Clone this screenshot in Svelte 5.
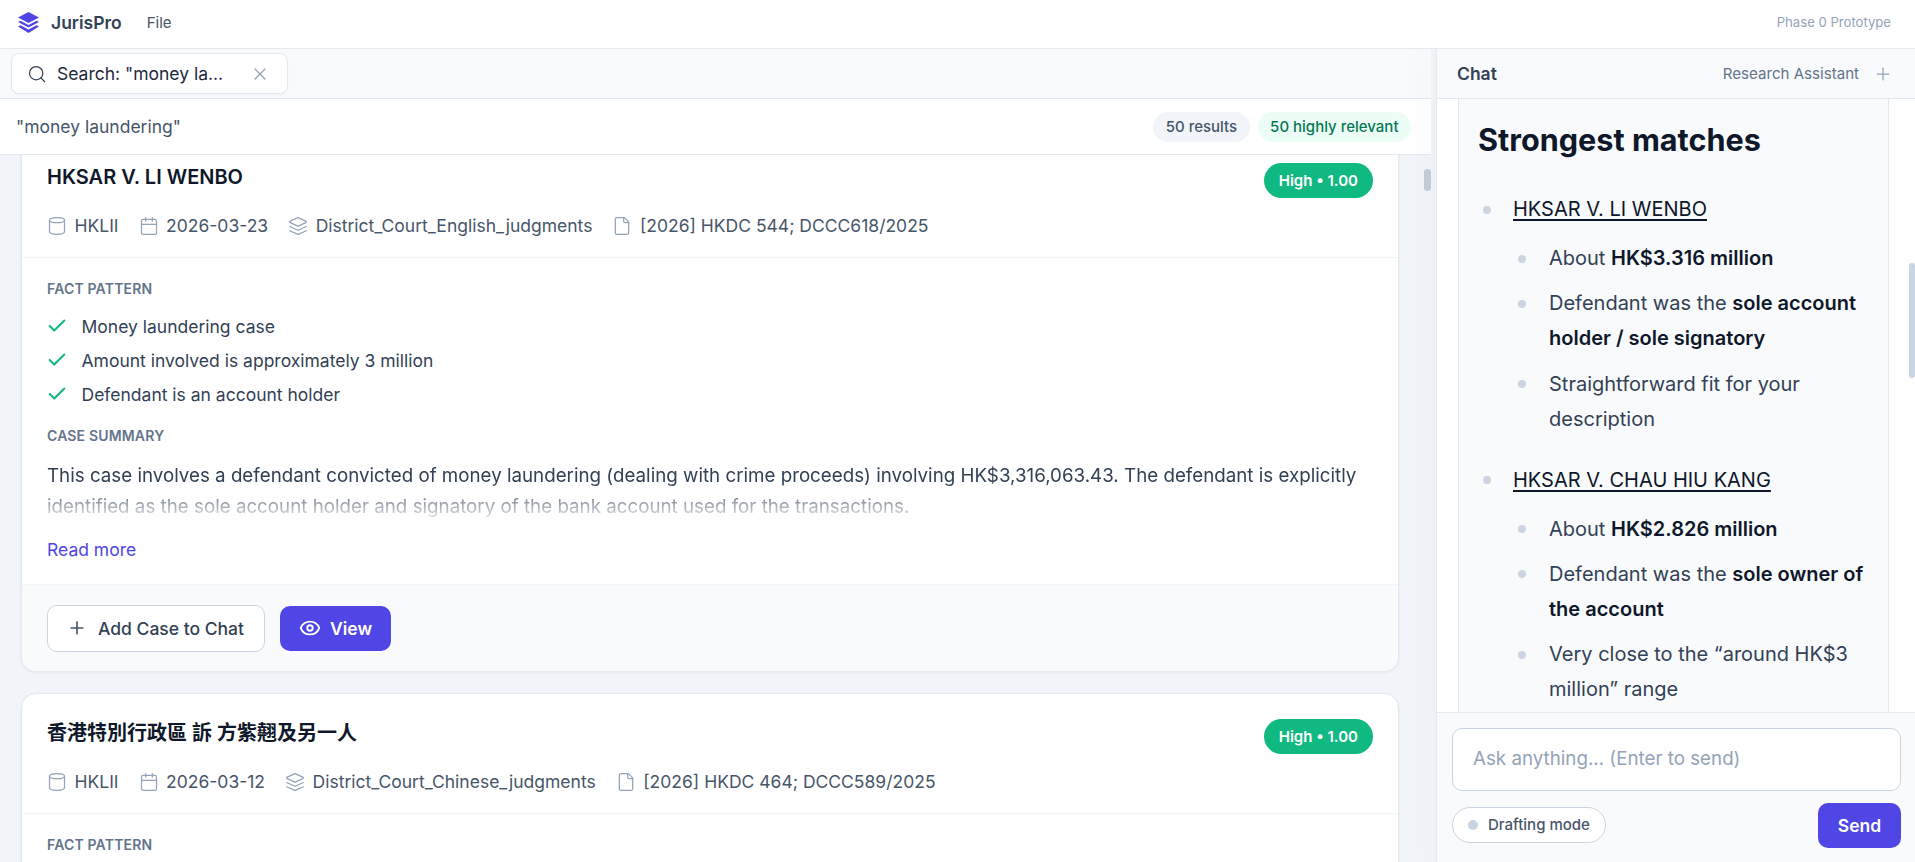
<script>
  const cards = [
    {
      title: 'HKSAR V. LI WENBO',
      date: '2026-03-23',
      court: 'District_Court_English_judgments',
      cite: '[2026] HKDC 544; DCCC618/2025',
      facts: ['Money laundering case', 'Amount involved is approximately 3 million', 'Defendant is an account holder'],
      summary: 'This case involves a defendant convicted of money laundering (dealing with crime proceeds) involving HK$3,316,063.43. The defendant is explicitly identified as the sole account holder and signatory of the bank account used for the transactions.'
    },
    {
      title: '香港特別行政區 訴 方紫翹及另一人',
      date: '2026-03-12',
      court: 'District_Court_Chinese_judgments',
      cite: '[2026] HKDC 464; DCCC589/2025',
      facts: [],
      summary: ''
    }
  ];
</script>

{#snippet stroke(d)}
  <svg class="ico" viewBox="0 0 24 24" fill="none" stroke="currentColor" stroke-width="1.5" stroke-linecap="round" stroke-linejoin="round" aria-hidden="true">
    {#each d as p}<path d={p} />{/each}
  </svg>
{/snippet}

<div class="app">
  <header class="top">
    <svg class="logo" viewBox="0 0 21 21" aria-hidden="true">
      <path d="M10.5 0 21 5.5 10.5 11 0 5.5z" />
      <path d="M2.5 8.7l8 4.2 8-4.2 2.5 1.3-10.5 5.5L0 10z" />
      <path d="M2.5 13.2l8 4.2 8-4.2 2.5 1.3L10.5 21 0 14.5z" />
    </svg>
    <span class="brand">JurisPro</span>
    <span class="menu">File</span>
    <span class="phase">Phase 0 Prototype</span>
  </header>

  <div class="main">
    <section class="left">
      <div class="tabs">
        <div class="tab">
          <span class="tab-search">{@render stroke(['M21 21l-4.3-4.3', 'M11 19a8 8 0 1 0 0-16 8 8 0 0 0 0 16z'])}</span>
          <span class="tab-label">Search: "money la...</span>
          <span class="tab-x">{@render stroke(['M18 6 6 18', 'M6 6l12 12'])}</span>
        </div>
      </div>
      <div class="results-head">
        <span class="query">"money laundering"</span>
        <span class="chip">50 results</span>
        <span class="chip green">50 highly relevant</span>
      </div>
      <div class="list">
        <div class="thumb"></div>
        {#each cards as c}
          <article class="card">
            <div class="card-head">
              <div class="title-row">
                <h3>{c.title}</h3>
                <span class="badge">High • 1.00</span>
              </div>
              <div class="meta">
                <span class="mi">{@render stroke(['M3 5v14c0 1.66 4 3 9 3s9-1.34 9-3V5', 'M12 8c4.97 0 9-1.34 9-3s-4.03-3-9-3-9 1.34-9 3 4.03 3 9 3z'])}HKLII</span>
                <span class="mi">{@render stroke(['M8 2v4', 'M16 2v4', 'M5 4h14a2 2 0 0 1 2 2v14a2 2 0 0 1-2 2H5a2 2 0 0 1-2-2V6a2 2 0 0 1 2-2z', 'M3 10h18'])}{c.date}</span>
                <span class="mi">{@render stroke(['M12.83 2.18a2 2 0 0 0-1.66 0L2.6 6.08a1 1 0 0 0 0 1.83l8.58 3.91a2 2 0 0 0 1.66 0l8.58-3.9a1 1 0 0 0 0-1.83z', 'M22 17.65l-9.17 4.16a2 2 0 0 1-1.66 0L2 17.65', 'M22 12.65l-9.17 4.16a2 2 0 0 1-1.66 0L2 12.65'])}{c.court}</span>
                <span class="mi">{@render stroke(['M15 2H6a2 2 0 0 0-2 2v16a2 2 0 0 0 2 2h12a2 2 0 0 0 2-2V7z', 'M14 2v4a2 2 0 0 0 2 2h4'])}{c.cite}</span>
              </div>
            </div>
            <div class="card-body">
              <h4>FACT PATTERN</h4>
              {#if c.facts.length}
                <ul class="facts">
                  {#each c.facts as f}
                    <li><span class="check">{@render stroke(['M20 6 9 17l-5-5'])}</span>{f}</li>
                  {/each}
                </ul>
              {/if}
              {#if c.summary}
                <h4 class="sum-label">CASE SUMMARY</h4>
                <p class="summary">{c.summary}</p>
                <a class="more" href="#more">Read more</a>
              {/if}
            </div>
            {#if c.summary}
              <div class="card-foot">
                <button class="btn ghost"><span class="btn-ico">{@render stroke(['M5 12h14', 'M12 5v14'])}</span>Add Case to Chat</button>
                <button class="btn primary"><span class="btn-ico">{@render stroke(['M2.06 12.35a1 1 0 0 1 0-.7 10.75 10.75 0 0 1 19.88 0 1 1 0 0 1 0 .7 10.75 10.75 0 0 1-19.88 0', 'M12 15a3 3 0 1 0 0-6 3 3 0 0 0 0 6z'])}</span>View</button>
              </div>
            {/if}
          </article>
        {/each}
      </div>
    </section>

    <div class="gutter"></div>

    <aside class="chat">
      <div class="chat-head">
        <span class="chat-title">Chat</span>
        <span class="assistant">Research Assistant</span>
        <span class="chat-plus">{@render stroke(['M5 12h14', 'M12 5v14'])}</span>
      </div>
      <div class="chat-scroll">
        <div class="chat-thumb"></div>
        <div class="bubble">
          <h2>Strongest matches</h2>
          <ul class="l1">
            <li>
              <a href="#a">HKSAR V. LI WENBO</a>
              <ul class="l2">
                <li>About <b>HK$3.316 million</b></li>
                <li>Defendant was the <b>sole account holder / sole signatory</b></li>
                <li>Straightforward fit for your description</li>
              </ul>
            </li>
            <li>
              <a href="#b">HKSAR V. CHAU HIU KANG</a>
              <ul class="l2">
                <li>About <b>HK$2.826 million</b></li>
                <li>Defendant was the <b>sole owner of the account</b></li>
                <li>Very close to the “around HK$3 million” range</li>
              </ul>
            </li>
          </ul>
        </div>
      </div>
      <div class="composer">
        <textarea rows="1" placeholder="Ask anything... (Enter to send)"></textarea>
        <div class="composer-row">
          <span class="mode"><i></i>Drafting mode</span>
          <button class="send">Send</button>
        </div>
      </div>
    </aside>
  </div>
</div>

<style>
  :global(body) { margin: 0; overflow: hidden; background: #fff; }
  .app {
    height: 100vh;
    display: flex;
    flex-direction: column;
    font-family: Inter, "Noto Sans CJK TC", sans-serif;
    color: #334155;
  }
  .top {
    height: 44px;
    flex: none;
    box-sizing: content-box;
    border-bottom: 1px solid #e2e8f0;
    display: flex;
    align-items: center;
    padding: 0 24px 4px 18px;
    background: #fff;
  }
  .logo { width: 21px; height: 21px; fill: #4f46e5; }
  .brand { margin-left: 12px; font-size: 17.5px; font-weight: 600; color: #334155; }
  .menu { margin-left: 25px; font-size: 15px; color: #475569; }
  .phase { margin-left: auto; font-size: 13.125px; color: #94a3b8; }

  .main { flex: 1; min-height: 0; display: flex; }
  .left { flex: 1; min-width: 0; display: flex; flex-direction: column; background: #f1f5f9; }

  .tabs {
    height: 50px;
    flex: none;
    box-sizing: border-box;
    background: #f8fafc;
    border-bottom: 1px solid #e2e8f0;
    padding: 4px 11px 0;
  }
  .tab {
    width: 277px;
    height: 41px;
    box-sizing: border-box;
    background: #fff;
    border: 1px solid #e2e8f0;
    border-radius: 8px;
    box-shadow: 0 1px 2px rgba(15, 23, 42, .04);
    display: flex;
    align-items: center;
    padding: 0 17px 0 15px;
  }
  .tab-search { color: #334155; width: 20px; height: 20px; display: flex; }
  .tab-label { margin-left: 10px; font-size: 17.5px; font-weight: 400; color: #1e293b; white-space: nowrap; }
  .tab-x { margin-left: auto; width: 20px; height: 20px; color: #94a3b8; display: flex; }

  .results-head {
    height: 56px;
    flex: none;
    box-sizing: border-box;
    background: #fff;
    border-bottom: 1px solid #e2e8f0;
    display: flex;
    align-items: center;
    gap: 8px;
    padding: 0 20px 0 16px;
  }
  .query { margin-right: auto; font-size: 17.5px; color: #475569; }
  .chip {
    height: 30px;
    display: flex;
    align-items: center;
    padding: 0 12.5px;
    border-radius: 15px;
    background: #f1f5f9;
    color: #475569;
    font-size: 15px;
    font-weight: 500;
  }
  .chip.green { background: #ecfdf5; color: #047857; }

  .list {
    flex: 1;
    min-height: 0;
    overflow: hidden;
    position: relative;
    padding: 0 32px 0 21px;
    display: flex;
    flex-direction: column;
    gap: 21px;
  }
  .thumb {
    position: absolute;
    right: 0;
    top: 14px;
    width: 7px;
    height: 22px;
    border-radius: 3px;
    background: #c5ccd8;
  }
  .card {
    flex: none;
    background: #fff;
    border: 1px solid #e2e8f0;
    border-radius: 15px;
    box-shadow: 0 1px 3px rgba(15, 23, 42, .06);
    overflow: hidden;
  }
  .card:first-of-type { margin-top: -18px; }
  .card-head { padding: 25px 25px 21px; border-bottom: 1px solid #f1f5f9; }
  .title-row { display: flex; justify-content: space-between; align-items: flex-start; }
  h3 { margin: -1px 0 0; font-size: 20px; line-height: 30px; font-weight: 600; color: #0f172a; }
  .badge {
    height: 35px;
    padding: 0 15px;
    display: flex;
    align-items: center;
    border-radius: 18px;
    background: #10b981;
    color: #fff;
    font-size: 15px;
    font-weight: 600;
  }
  .meta { margin-top: 18px; display: flex; gap: 20px; font-size: 17.5px; line-height: 20px; color: #475569; }
  .mi { display: flex; align-items: center; gap: 7.5px; white-space: nowrap; }
  .mi .ico { width: 20px; height: 20px; color: #94a3b8; flex: none; }
  .ico { width: 100%; height: 100%; display: block; }

  .card-body { padding: 22px 25px 23px; }
  h4 { margin: 0; font-size: 14px; line-height: 18px; font-weight: 600; letter-spacing: .012em; color: #64748b; }
  .facts { list-style: none; margin: 11px 0 0; padding: 0; }
  .facts li { height: 34px; display: flex; align-items: center; font-size: 17.5px; color: #334155; }
  .check { width: 22px; height: 22px; margin: 0 14px 0 -1.5px; color: #10b981; flex: none; }
  .check :global(svg) { stroke-width: 2.2; }
  .sum-label { margin-top: 16px; }
  .summary {
    margin: 15px 0 0;
    font-size: 18.75px;
    line-height: 31px;
    color: #334155;
    height: 62px;
    -webkit-mask-image: linear-gradient(#000 35%, rgba(0, 0, 0, .05) 100%);
    mask-image: linear-gradient(#000 35%, rgba(0, 0, 0, .05) 100%);
  }
  .more { display: block; margin-top: 17px; font-size: 17.5px; line-height: 22px; color: #4f46e5; text-decoration: none; }

  .card-foot {
    height: 87px;
    box-sizing: border-box;
    background: #f8fafc;
    border-top: 1px solid #f1f5f9;
    display: flex;
    align-items: center;
    gap: 15px;
    padding: 0 25px;
  }
  .btn {
    display: flex;
    align-items: center;
    font: inherit;
    font-size: 17.5px;
    font-weight: 500;
    border-radius: 10px;
    cursor: pointer;
  }
  .btn.ghost { height: 47px; background: #fff; border: 1px solid #cbd5e1; color: #334155; padding: 0 20px 0 19px; gap: 11px; }
  .btn.primary { height: 45px; background: #4f46e5; border: none; color: #fff; font-weight: 600; padding: 0 19px; gap: 9px; }
  .btn-ico { display: block; }
  .ghost .btn-ico { width: 20px; height: 20px; color: #475569; }
  .primary .btn-ico { width: 22px; height: 22px; }
  .btn-ico :global(svg) { stroke-width: 2; }

  .gutter {
    width: 5px;
    flex: none;
    background: #eef2f7;
    position: relative;
    z-index: 2;
    box-shadow: -6px 0 24px rgba(15, 23, 42, .06);
  }
  .chat {
    width: 479px;
    flex: none;
    box-sizing: border-box;
    border-left: 1px solid #e2e8f0;
    display: flex;
    flex-direction: column;
    background: #fff;
    position: relative;
    z-index: 3;
  }
  .chat-head {
    height: 50px;
    flex: none;
    box-sizing: border-box;
    background: #f8fafc;
    border-bottom: 1px solid #e2e8f0;
    display: flex;
    align-items: center;
    padding: 0 22px 0 20px;
  }
  .chat-title { font-size: 17.5px; font-weight: 600; color: #334155; margin-right: auto; }
  .assistant { font-size: 15.1px; color: #64748b; }
  .chat-plus { width: 20px; height: 20px; margin-left: 14px; color: #94a3b8; }

  .chat-scroll { flex: 1; min-height: 0; overflow: hidden; position: relative; padding: 0 26px 0 21px; }
  .chat-thumb { position: absolute; right: 0; top: 164px; width: 6px; height: 115px; border-radius: 3px; background: #cbd5e1; }
  .bubble {
    box-sizing: border-box;
    background: #f8fafc;
    border: 1px solid #e2e8f0;
    border-top: none;
    padding: 20px 20px 24px 19px;
    min-height: 100%;
    font-size: 20px;
    line-height: 35px;
    color: #334155;
  }
  h2 { margin: 0 0 31px; font-size: 30.6px; line-height: 42px; font-weight: 700; color: #0f172a; }
  .l1, .l2 { margin: 0; padding: 0; list-style: none; }
  .l1 > li { position: relative; padding-left: 35px; margin-top: 26px; }
  .l1 > li > a { color: #0f172a; text-decoration: underline; text-decoration-thickness: 2px; text-underline-offset: 3px; }
  .l2 > li { position: relative; padding-left: 36px; margin-top: 10.3px; }
  .l2 { margin-top: 14px; }
  .l1 > li::before, .l2 > li::before {
    content: "";
    position: absolute;
    left: 4.5px;
    top: 13.5px;
    width: 8px;
    height: 8px;
    border-radius: 50%;
    background: #cbd5e1;
  }
  b { font-weight: 600; color: #0f172a; }

  .composer {
    flex: none;
    height: 150px;
    box-sizing: border-box;
    background: #f8fafc;
    border-top: 1px solid #e2e8f0;
    padding: 15px 14px 0 15px;
  }
  textarea {
    display: block;
    width: 100%;
    height: 63px;
    box-sizing: border-box;
    resize: none;
    border: 1px solid #cbd5e1;
    border-radius: 10px;
    background: #fff;
    padding: 16px 20px;
    font: inherit;
    font-size: 18.75px;
    line-height: 27px;
    outline: none;
  }
  textarea::placeholder { color: #94a3b8; opacity: 1; }
  .composer-row { margin-top: 12px; display: flex; align-items: center; justify-content: space-between; }
  .mode {
    height: 36px;
    box-sizing: border-box;
    display: flex;
    align-items: center;
    padding: 0 15px;
    gap: 10px;
    border: 1px solid #cbd5e1;
    border-radius: 18px;
    background: #fff;
    font-size: 15px;
    font-weight: 500;
    color: #475569;
    margin-bottom: 2px;
  }
  .mode i { width: 10px; height: 10px; border-radius: 50%; background: #cbd5e1; }
  .send {
    height: 45px;
    width: 83px;
    border: none;
    border-radius: 10px;
    background: #4f46e5;
    color: #fff;
    font: inherit;
    font-size: 17.5px;
    font-weight: 600;
  }
</style>
